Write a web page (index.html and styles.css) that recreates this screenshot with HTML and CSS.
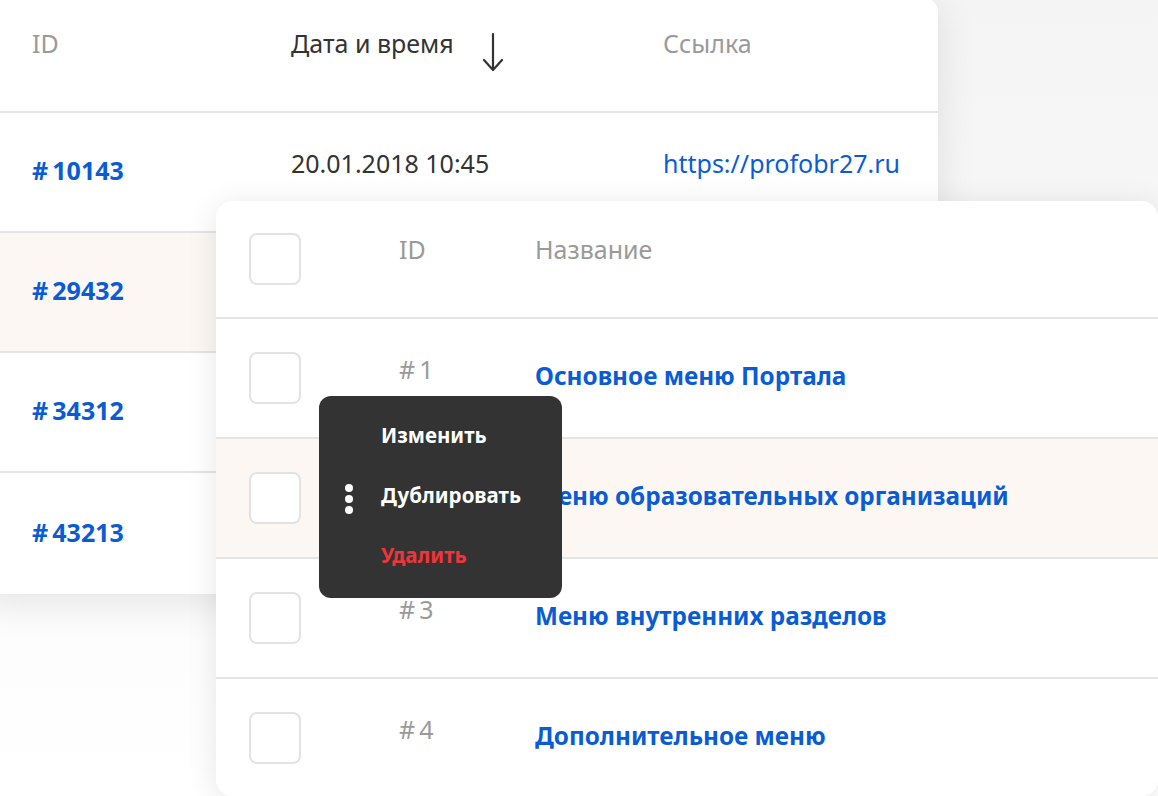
FILE: index.html
```html
<!DOCTYPE html>
<html lang="ru">
<head>
<meta charset="utf-8">
<link rel="stylesheet" href="styles.css">
</head>
<body>
<div class="stage">
  <section class="card links">
    <div class="lrow lhead">
      <div class="cell muted">ID</div>
      <div class="cell dark sort">Дата и время
        <svg class="arrow" width="22" height="40" viewBox="0 0 22 40"><path d="M11 2 V37 M2 28 L11 38 L20 28" fill="none" stroke="#333" stroke-width="2.2" stroke-linecap="round" stroke-linejoin="round"/></svg>
      </div>
      <div class="cell muted">Ссылка</div>
    </div>
    <div class="lrow">
      <div class="cell id">#&#8239;10143</div>
      <div class="cell dark up">20.01.2018 10:45</div>
      <div class="cell link up">https://profobr27.ru</div>
    </div>
    <div class="lrow hl">
      <div class="cell id">#&#8239;29432</div>
      <div class="cell"></div>
      <div class="cell"></div>
    </div>
    <div class="lrow">
      <div class="cell id">#&#8239;34312</div>
      <div class="cell"></div>
      <div class="cell"></div>
    </div>
    <div class="lrow last">
      <div class="cell id">#&#8239;43213</div>
      <div class="cell"></div>
      <div class="cell"></div>
    </div>
  </section>

  <section class="card menus">
    <div class="mrow mhead">
      <span class="box"></span>
      <div class="cell muted hup">ID</div>
      <div class="cell muted hup">Название</div>
    </div>
    <div class="mrow">
      <span class="box"></span>
      <div class="cell num">#&#8239;1</div>
      <div class="cell name">Основное меню Портала</div>
    </div>
    <div class="mrow hl">
      <span class="box"></span>
      <div class="cell num"></div>
      <div class="cell name">Меню образовательных организаций</div>
    </div>
    <div class="mrow">
      <span class="box"></span>
      <div class="cell num">#&#8239;3</div>
      <div class="cell name">Меню внутренних разделов</div>
    </div>
    <div class="mrow last">
      <span class="box"></span>
      <div class="cell num">#&#8239;4</div>
      <div class="cell name">Дополнительное меню</div>
    </div>
  </section>

  <div class="ctx">
    <div class="ctx-item"><span class="dots hidden"></span>Изменить</div>
    <div class="ctx-item"><span class="dots"><i></i><i></i><i></i></span>Дублировать</div>
    <div class="ctx-item danger"><span class="dots hidden"></span>Удалить</div>
  </div>
</div>
</body>
</html>
```
FILE: styles.css
```css
* { box-sizing: border-box; }
html, body { margin: 0; padding: 0; }
body {
  width: 1158px;
  height: 796px;
  overflow: hidden;
  background: #ffffff;
  font-family: "Noto Sans", "Open Sans", sans-serif;
  font-size: 25px;
  color: #333;
}
.stage {
  position: relative;
  width: 1158px;
  height: 796px;
  padding-top: 1px;
  background: linear-gradient(180deg, #f4f4f4 0%, #fafafa 60%, #ffffff 100%);
}
.card {
  background: #fff;
  border-radius: 14px;
  box-shadow: 0 8px 40px rgba(0, 0, 0, 0.10);
  overflow: hidden;
}
.links {
  width: 958px;
  margin-left: -20px;
  margin-top: -3px;
}
.lrow {
  display: grid;
  grid-template-columns: 259px 372px 1fr;
  align-items: center;
  height: 120px;
  border-bottom: 2px solid #e4e4e4;
  padding-left: 52px;
}
.lrow.last { border-bottom: 0; height: 121px; }
.lhead { height: 115px; align-items: start; padding-top: 30px; }
.hl { background: #fdf7f3; }
.cell { line-height: 30px; white-space: nowrap; }
.muted { color: #9a9a9a; }
.dark { color: #333; }
.sort { display: flex; align-items: flex-start; }
.arrow { margin-left: 28px; margin-top: 4px; }
.id { color: #0a5cd5; font-weight: 700; font-size: 25px; margin-bottom: 4px; }
.link { color: #0a5cd5; }
.up { margin-bottom: 18px; }

.menus {
  position: absolute;
  left: 216px;
  top: 201px;
  width: 942px;
  height: 595px;
  border-radius: 16px;
  box-shadow: 0 4px 30px rgba(0, 0, 0, 0.10);
  display: flex;
  flex-direction: column;
}
.mrow {
  display: grid;
  grid-template-columns: 150px 136px 1fr;
  align-items: center;
  height: 120px;
  flex: none;
  padding-left: 33px;
  border-bottom: 2px solid #e4e4e4;
}
.mhead { height: 118px; }
.mrow.last { border-bottom: 0; flex: 1; height: auto; }
.box {
  width: 52px;
  height: 52px;
  border: 2px solid #e3e3e3;
  border-radius: 8px;
  background: #fff;
}
.hup { margin-bottom: 20px; }
.num { color: #9a9a9a; font-size: 25px; margin-bottom: 18px; }
.name { color: #0a5cd5; font-weight: 700; font-size: 24.3px; margin-bottom: 4px; }

.ctx {
  position: absolute;
  left: 319px;
  top: 396px;
  width: 243px;
  height: 202px;
  background: #333333;
  border-radius: 12px;
  padding: 9px 0 0 26px;
  display: flex;
  flex-direction: column;
}
.ctx-item {
  height: 60px;
  display: flex;
  align-items: center;
  gap: 28px;
  color: #fff;
  font-weight: 700;
  font-size: 20.5px;
}
.ctx-item.danger { color: #f0353a; }
.dots {
  width: 8px;
  display: flex;
  flex-direction: column;
  gap: 3px;
  margin-top: 7px;
}
.dots.hidden { visibility: hidden; height: 1px; }
.dots i {
  display: block;
  width: 8px;
  height: 8px;
  border-radius: 50%;
  background: #fff;
}
```
